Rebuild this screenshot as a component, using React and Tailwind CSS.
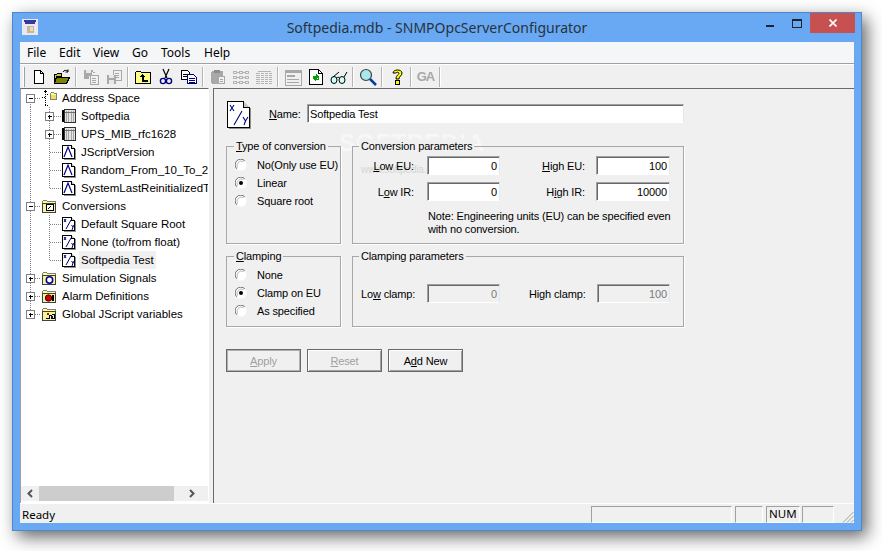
import React from "react";

const ui = "font-['Liberation_Sans',Arial,sans-serif] text-[11.5px] leading-[14px] text-black";

const menus = [
  { label: "File", w: "w-[32px]" },
  { label: "Edit", w: "w-[34px]" },
  { label: "View", w: "w-[39px]" },
  { label: "Go", w: "w-[29px]" },
  { label: "Tools", w: "w-[43px]" },
  { label: "Help", w: "w-[40px]" },
];

const Ico = ({ children }) => (
  <svg width="18" height="18" viewBox="0 0 18 18" shapeRendering="crispEdges">
    {children}
  </svg>
);

// toolbar drawings
const NewIcon = () => (
  <Ico>
    <path d="M4.5 2.5h6l3 3v10h-9z" fill="#fff" stroke="#000" />
    <path d="M10.5 2.5v3h3" fill="none" stroke="#000" />
  </Ico>
);
const OpenIcon = () => (
  <Ico>
    <path d="M1.5 15.5v-9h2l1-1h4v3h-5l-2 7h11l3-6h-3" fill="#c8c850" stroke="#000" />
    <path d="M1.5 15.5l2-6h13l-3 6z" fill="#808000" stroke="#000" />
    <path d="M10 4c1-2 3-2 5-1M15 1.500v2.500h-2.500" fill="none" stroke="#000" shapeRendering="auto" />
  </Ico>
);
const GrayCopy = () => (
  <Ico>
    <path d="M2 2h9v3h2v-1h-2M2 2v9h5v-3h3v-3h1" fill="#a8a8a8" />
    <rect x="8" y="7" width="8" height="9" fill="#f0f0f0" stroke="#a8a8a8" />
    <path d="M10 10h4M10 12h4M10 14h4" stroke="#a8a8a8" />
    <path d="M4 2v3h5V2" fill="#e8e8e8" />
  </Ico>
);
const GrayDisk = () => (
  <Ico>
    <rect x="8" y="2" width="8" height="10" fill="#f0f0f0" stroke="#a8a8a8" />
    <path d="M10 5h4M10 7h4M10 9h4" stroke="#a8a8a8" />
    <path d="M2 7h9v9H2z" fill="#a8a8a8" />
    <path d="M4 7h5v3H4zM4 12h5v4H4z" fill="#e8e8e8" />
  </Ico>
);
const UpIcon = () => (
  <Ico>
    <path d="M1.500 15.500v-11l1-1h4l1 1h9v11z" fill="#ffff80" stroke="#000" />
    <path d="M8.500 6l3 3h-2v3h4v1.500H8V9H5.500z" fill="#000" />
  </Ico>
);
const CutIcon = () => (
  <Ico>
    <path d="M6 1l4 9M12 1L8 10" stroke="#000" strokeWidth="1.200" fill="none" shapeRendering="auto" />
    <circle cx="6" cy="13" r="2.600" fill="none" stroke="#000080" strokeWidth="1.400" shapeRendering="auto" />
    <circle cx="12" cy="13" r="2.600" fill="none" stroke="#000080" strokeWidth="1.400" shapeRendering="auto" />
  </Ico>
);
const CopyIcon = () => (
  <Ico>
    <path d="M1.500 2.500h6l2 2v7h-8z" fill="#fff" stroke="#000" />
    <path d="M3 6h4M3 8h4" stroke="#000" />
    <path d="M7.500 6.500h6l3 3v6h-9z" fill="#fff" stroke="#000080" />
    <path d="M9 10h6M9 12h6M9 14h6" stroke="#000080" />
  </Ico>
);
const GrayClip = () => (
  <Ico>
    <path d="M3 3h10l1 1v4H9v8H3l-1-1V4z" fill="#a8a8a8" />
    <path d="M5 2h6v3H5z" fill="#8c8c8c" />
    <rect x="9.500" y="8.500" width="6" height="7" fill="#f0f0f0" stroke="#a8a8a8" />
    <path d="M11 11h3M11 13h3" stroke="#a8a8a8" />
  </Ico>
);
const GrayList = () => (
  <Ico>
    <path d="M1.500 3.500h3v2h-3zM7.500 3.500h3v2h-3zM13.500 3.500h3v2h-3zM1.500 8.500h3v2h-3zM7.500 8.500h3v2h-3zM13.500 8.500h3v2h-3zM1.500 13.500h3v2h-3zM7.500 13.500h3v2h-3zM13.500 13.500h3v2h-3z" fill="none" stroke="#b4b4b4" />
    <path d="M5 4.500h2M11 4.500h2M5 9.500h2M11 9.500h2M5 14.500h2M11 14.500h2" stroke="#b4b4b4" />
  </Ico>
);
const GrayGrid = () => (
  <Ico>
    <path d="M3 3h13M1 5h16M1 7h16M1 9h16M1 11h16M1 13h16M1 15h16" stroke="#b4b4b4" />
    <path d="M5 4v12M9 4v12M13 4v12" stroke="#f0f0f0" />
  </Ico>
);
const FormIcon = () => (
  <Ico>
    <rect x="1" y="2" width="16" height="15" fill="#f0f0f0" stroke="#a8a8a8" />
    <path d="M1 3.500h16" stroke="#a8a8a8" strokeWidth="2" />
    <path d="M3 7h8v2H3zM3 11h12v1H3zM3 14h12v1H3z" fill="#a8a8a8" />
  </Ico>
);
const RefreshIcon = () => (
  <Ico>
    <path d="M2.500 1.500h9l4 4v11h-13z" fill="#fff" stroke="#000" />
    <path d="M11.500 1.500v4h4" fill="none" stroke="#000" />
    <path d="M6 8h3V6l3 3-3 2V9.500H7.500V11H6zM12 12H9v2l-3-3 3-2v1.500h1.500V9H12z" fill="#00a000" />
  </Ico>
);
const GlassesIcon = () => (
  <Ico>
    <ellipse cx="4" cy="12" rx="3" ry="3.500" fill="#c8ffff" stroke="#000" shapeRendering="auto" />
    <ellipse cx="12" cy="12" rx="3" ry="3.500" fill="#c8ffff" stroke="#000" shapeRendering="auto" />
    <path d="M6.500 10c1-1 2-1 3 0M3 9l6-5M14 9l3-5" fill="none" stroke="#000" shapeRendering="auto" />
  </Ico>
);
const SearchIcon = () => (
  <Ico>
    <circle cx="7" cy="7" r="5.500" fill="#a8e8e8" stroke="#404040" strokeWidth="1.200" shapeRendering="auto" />
    <path d="M11 11l6 6" stroke="#0040a0" strokeWidth="2.500" shapeRendering="auto" />
  </Ico>
);
const HelpIcon = () => (
  <Ico>
    <path d="M5 5c0-4 9-4 9 0 0 3-3 3-3 6H8c0-4 3-4 3-6-1-1-2-1-3 0z" fill="#ffff00" stroke="#000" shapeRendering="auto" />
    <rect x="7.500" y="12.500" width="3.500" height="3.500" fill="#ffff00" stroke="#000" />
  </Ico>
);

const tools = [
  [NewIcon, OpenIcon],
  [GrayCopy, GrayDisk],
  [UpIcon, CutIcon, CopyIcon],
  [GrayClip, GrayList, GrayGrid],
  [FormIcon, RefreshIcon, GlassesIcon],
  [SearchIcon],
  [HelpIcon],
];

// tree drawings
const Folder = ({ children }) => (
  <svg width="16" height="16" viewBox="0 0 16 16" shapeRendering="crispEdges">
    <path d="M1.500 14.500v-11l1-1h3l1 1h8v11z" fill="#ffff80" stroke="#808080" />
    <path d="M1.500 14.500v-9h13v9z" fill="#f4f4a0" stroke="#404040" />
    {children}
  </svg>
);
const ConvFolder = () => (
  <Folder>
    <rect x="5.500" y="6.500" width="7" height="6" fill="#fff" stroke="#000" />
    <path d="M7 11l3-3" stroke="#000" shapeRendering="auto" />
  </Folder>
);
const SimFolder = () => (
  <Folder>
    <circle cx="8.500" cy="10" r="3.200" fill="#fff" stroke="#0000a0" strokeWidth="1.500" shapeRendering="auto" />
  </Folder>
);
const AlarmFolder = () => (
  <Folder>
    <circle cx="7.500" cy="10" r="3.200" fill="#d00000" stroke="#400000" shapeRendering="auto" />
    <path d="M12 7v6" stroke="#000" strokeWidth="1.500" />
  </Folder>
);
const GlobalFolder = () => (
  <Folder>
    <path d="M5 12h3V9h2v3h3V8h-2" fill="none" stroke="#000" />
    <rect x="6" y="7" width="2" height="2" fill="#d00000" />
    <rect x="10" y="10" width="2" height="2" fill="#0000c0" />
  </Folder>
);
const SpaceIcon = () => (
  <svg width="16" height="16" viewBox="0 0 16 16" shapeRendering="crispEdges">
    <path d="M4 4.500h3M1 7.500h3M4.500 2v13M4 15.500h4" stroke="#000" strokeDasharray="1 1" />
    <path d="M2.500 2l2-2 2 2z" fill="#000" />
    <path d="M9.500 9.500v-6l1-1h2l1 1h2v6z" fill="#ffff80" stroke="#808080" />
    <path d="M10 5h5v4h-5z" fill="#e8e060" />
  </svg>
);
const TableIcon = () => (
  <svg width="16" height="16" viewBox="0 0 16 16" shapeRendering="crispEdges">
    <path d="M1.500 2v12" stroke="#000" strokeWidth="2" />
    <rect x="3.500" y="1.500" width="11" height="13" fill="#e4e4e4" stroke="#303030" />
    <path d="M5 3v11M7 3v11M10 3v11M12 3v11" stroke="#a8a8a8" />
    <path d="M4 4h10" stroke="#707070" />
  </svg>
);
const Page = ({ children }) => (
  <svg width="16" height="16" viewBox="0 0 16 16" shapeRendering="crispEdges">
    <path d="M1.500 1.500h9l3 3v10h-12z" fill="#fff" stroke="#000" />
    <path d="M10.500 1.500v3h3" fill="#c0c0c0" stroke="#000" />
    <path d="M14.500 5v10.500H3" fill="none" stroke="#909090" />
    {children}
  </svg>
);
const SignalIcon = () => (
  <Page>
    <path d="M3 13L7 3l4 10" fill="none" stroke="#000080" strokeWidth="1.200" shapeRendering="auto" />
  </Page>
);
const RatioIcon = () => (
  <Page>
    <path d="M3 3l2 3M5 3L3 6M5 13l5-9M10.500 9l1.500 2 1-2M12 11l-1 3" fill="none" stroke="#000080" shapeRendering="auto" />
  </Page>
);

const rows = [
  { label: "Address Space", level: 0, exp: "-", Icon: SpaceIcon, first: true },
  { label: "Softpedia", level: 1, exp: "+", Icon: TableIcon },
  { label: "UPS_MIB_rfc1628", level: 1, exp: "+", Icon: TableIcon },
  { label: "JScriptVersion", level: 1, Icon: SignalIcon },
  { label: "Random_From_10_To_20", level: 1, Icon: SignalIcon },
  { label: "SystemLastReinitializedTime", level: 1, Icon: SignalIcon, lastChild: true },
  { label: "Conversions", level: 0, exp: "-", Icon: ConvFolder },
  { label: "Default Square Root", level: 1, Icon: RatioIcon },
  { label: "None (to/from float)", level: 1, Icon: RatioIcon },
  { label: "Softpedia Test", level: 1, Icon: RatioIcon, lastChild: true, selected: true },
  { label: "Simulation Signals", level: 0, exp: "+", Icon: SimFolder },
  { label: "Alarm Definitions", level: 0, exp: "+", Icon: AlarmFolder },
  { label: "Global JScript variables", level: 0, exp: "+", Icon: GlobalFolder, last: true },
];

const Expander = ({ x, open }) => (
  <g>
    <rect x={x - 4} y="5.500" width="8" height="8" fill="#fff" stroke="#808080" />
    <path d={`M${x - 2} 9.500h4`} stroke="#000" />
    {!open && <path d={`M${x} 7.500v4`} stroke="#000" />}
  </g>
);

const dots = { stroke: "#808080", strokeDasharray: "1 1", fill: "none" };

const Gutter = ({ row }) => {
  const rootX = 9.5;
  const childX = 28.5;
  if (row.level === 0) {
    return (
      <svg width="20" height="18" className="shrink-0" shapeRendering="crispEdges">
        <path d={`M${rootX} ${row.first ? 9 : 0}V${row.last ? 9 : 18}`} {...dots} />
        <path d={`M${rootX} 9.500H20`} {...dots} />
        <Expander x={rootX} open={row.exp === "-"} />
      </svg>
    );
  }
  return (
    <svg width="40" height="18" className="shrink-0" shapeRendering="crispEdges">
      <path d={`M${rootX} 0V18`} {...dots} />
      <path d={`M${childX} 0V${row.lastChild ? 9 : 18}`} {...dots} />
      <path d={`M${childX} 9.500H40`} {...dots} />
      {row.exp && <Expander x={childX} open={false} />}
    </svg>
  );
};

const TreeRow = ({ row }) => (
  <div className="flex h-[18px] w-max items-center whitespace-nowrap">
    <Gutter row={row} />
    <div className="h-[16px] w-[16px] shrink-0">
      <row.Icon />
    </div>
    <span
      className={
        row.level === 0
          ? "ml-[5px] shrink-0"
          : row.selected
            ? "ml-[2px] flex h-[18px] shrink-0 items-center bg-[#f0f0f0] px-[2px]"
            : "ml-[4px] shrink-0"
      }
    >
      {row.label}
    </span>
  </div>
);

const Radio = ({ label, checked }) => (
  <div className="flex h-[18px] items-center gap-[10px] whitespace-nowrap">
    <svg width="12" height="12" viewBox="0 0 12 12" className="shrink-0">
      <circle cx="6" cy="6" r="5.500" fill="#fff" />
      <path d="M1.800 9.800A5.500 5.500 0 0 1 9.800 1.800" fill="none" stroke="#707070" />
      <path d="M2.500 8.500A4.500 4.500 0 0 1 8.500 2.500" fill="none" stroke="#b8b8b8" />
      {checked && <circle cx="6" cy="6" r="2" fill="#000" />}
    </svg>
    <span>{label}</span>
  </div>
);

const Group = ({ title, className, legendClass = "left-[7px]", children }) => (
  <div className={`relative border border-[#a8a8a8] shadow-[1px_1px_0_#fff] ${className}`}>
    <span className={`absolute -top-[8px] whitespace-nowrap bg-[#f0f0f0] px-[2px] ${legendClass}`}>{title}</span>
    {children}
  </div>
);

const Field = ({ value = "", disabled, className = "" }) => (
  <div
    className={`flex h-[19px] items-center justify-end border border-t-[#a0a0a0] border-l-[#a0a0a0] border-r-[#e8e8e8] border-b-[#fff] px-[2px] shadow-[inset_1px_1px_0_#696969] ${disabled ? "bg-[#f0f0f0] text-[#7a7a7a]" : "bg-white"} ${className}`}
  >
    {value}
  </div>
);

const Btn = ({ children, disabled, primary }) => (
  <div
    className={`flex h-[23px] w-[75px] items-center justify-center border border-[#696969] shadow-[inset_1px_1px_0_#fff,inset_-1px_-1px_0_#a0a0a0] ${primary ? "border-[#555] outline outline-[#b0b0b0] -outline-offset-2" : ""} ${disabled ? "text-[#a0a0a0]" : ""}`}
  >
    {children}
  </div>
);

const Chevron = ({ d }) => (
  <svg width="9" height="9" viewBox="0 0 9 9">
    <path d={d} fill="none" stroke="#555" strokeWidth="2" />
  </svg>
);

const StatusCell = ({ className, children }) => (
  <div
    className={`flex h-[17px] items-center border border-t-[#a0a0a0] border-l-[#a0a0a0] border-r-white border-b-white pl-[2px] ${className}`}
  >
    {children}
  </div>
);

const Sep = () => <div className="mx-[2px] h-[20px] w-[2px] border-l border-r border-l-[#b4b4b4] border-r-white" />;

export default function App() {
  return (
    <div className="h-[551px] w-[882px] overflow-hidden bg-white pl-[12px] pt-[12px]">
      <div className="flex h-[519px] w-[850px] flex-col border border-[#4f88c8] bg-[#69a8f2] shadow-[5px_6px_16px_rgba(0,0,0,0.6)]">
        {/* Title bar */}
        <div className="grid h-[29px] shrink-0 grid-cols-[1fr_auto_1fr]">
          <div className="pl-[9px] pt-[6px]">
            <svg width="16" height="16" viewBox="0 0 16 16" shapeRendering="crispEdges">
              <rect width="16" height="16" fill="#e8e8f4" />
              <path d="M2 2h12M3 4h10" stroke="#3838a0" strokeWidth="1.200" />
              <path d="M5 7h7v7H5z" fill="#c8b890" />
              <path d="M8 8h3v4H8z" fill="#e8dcc0" />
            </svg>
          </div>
          <div className="pt-[5px] font-['Noto_Sans',sans-serif] text-[14px] leading-[20px] text-[#263340]">
            Softpedia.mdb - SNMPOpcServerConfigurator
          </div>
          <div className="flex items-start justify-end pr-[6px]">
            <div className="mr-[18px] mt-[12px] h-[2px] w-[8px] bg-[#1c2430]" />
            <div className="mr-[8px] mt-[6px] h-[9px] w-[10px] border border-t-2 border-[#1c2430]" />
            <div className="flex h-[20px] w-[45px] items-center justify-center bg-[#c75050]">
              <svg width="8" height="8" viewBox="0 0 8 8">
                <path d="M0.500 0.500l7 7M7.500 0.500l-7 7" stroke="#fff" strokeWidth="1.600" />
              </svg>
            </div>
          </div>
        </div>

        {/* Client area */}
        <div className={`mx-[7px] mb-[7px] flex min-h-0 flex-1 flex-col bg-[#f0f0f0] ${ui}`}>
          <div className="flex h-[22px] shrink-0 items-center border-b border-[#a0a0a0] bg-[#f5f6f7] pl-[7px] font-['Noto_Sans',sans-serif] text-[12px]">
            {menus.map((m) => (
              <div key={m.label} className={m.w}>
                {m.label}
              </div>
            ))}
          </div>

          <div className="flex h-[24px] shrink-0 items-center border-t border-white pl-[3px]">
            <div className="mr-[2px] h-[20px] w-[2px] border-l border-r border-l-white border-r-[#a0a0a0]" />
            {tools.map((group, i) => (
              <React.Fragment key={i}>
                {group.map((Icon, j) => (
                  <div key={j} className="flex h-[22px] w-[23px] items-center justify-center">
                    <Icon />
                  </div>
                ))}
                <Sep />
              </React.Fragment>
            ))}
            <div className="flex h-[22px] w-[23px] items-center justify-center text-[13px] font-bold tracking-[-1px] text-[#a8a8a8]">
              GA
            </div>
            <Sep />
          </div>

          <div className="flex h-[415px] shrink-0 gap-[4px]">
            {/* Tree pane */}
            <div className="flex w-[189px] shrink-0 flex-col border-l border-t border-r border-l-[#a0a0a0] border-t-[#696969] border-r-white bg-white">
              <div className="min-h-0 flex-1 overflow-hidden">
                {rows.map((row) => (
                  <TreeRow key={row.label} row={row} />
                ))}
              </div>
              <div className="mb-[2px] flex h-[15px] shrink-0 items-center bg-[#f0f0f0]">
                <div className="flex w-[18px] justify-center">
                  <Chevron d="M6 1L2.500 4.500 6 8" />
                </div>
                <div className="h-full w-[135px] bg-[#cdcdcd]" />
                <div className="flex flex-1 justify-center pl-[1px]">
                  <Chevron d="M3 1l3.500 3.500L3 8" />
                </div>
              </div>
            </div>

            {/* Form pane */}
            <div className="relative flex-1 border-l border-t border-l-[#696969] border-t-[#696969] pl-[12px] pt-[12px] text-[11px] tracking-[-0.14px]">
              {/* faint watermark behind the form */}
              <span className="pointer-events-none absolute left-[125px] top-[42px] text-[24px] font-bold leading-[24px] tracking-[1px] text-[#f7f7f7]">
                SOFTPEDIA
              </span>
              <span className="pointer-events-none absolute left-[147px] top-[74px] text-[10px] text-[#d4d4d4]">
                www.softpedia.com
              </span>

              <div className="flex h-[27px] items-start">
                <div className="ml-[1px] shrink-0">
                  <svg width="24" height="28" viewBox="0 0 24 28" shapeRendering="crispEdges">
                    <path d="M0.500 0.500h16l6 6v20h-22z" fill="#fff" stroke="#000" />
                    <path d="M16.500 0.500v6h6" fill="#c8c8c8" stroke="#000" />
                    <path d="M23.500 7v20.500H2" fill="none" stroke="#909090" />
                    <path d="M3 4l4 6M7 4l-4 6M7 24l8-14M16 16l2.500 4 2.500-4M18.500 20l-1.500 4" fill="none" stroke="#000080" strokeWidth="1.100" shapeRendering="auto" />
                  </svg>
                </div>
                <span className="ml-[18px] mt-[6px] w-[38px] shrink-0">
                  <u>N</u>ame:
                </span>
                <div className="mt-[3px] flex h-[19px] w-[377px] items-center border border-t-[#a0a0a0] border-l-[#a0a0a0] border-r-[#e8e8e8] border-b-white bg-white pl-[2px] shadow-[inset_1px_1px_0_#696969]">
                  Softpedia Test
                </div>
              </div>

              <div className="mt-[18px] flex gap-[11px]">
                <Group
                  className="h-[98px] w-[115px] pl-[8px] pt-[9px]"
                  title={
                    <>
                      <u>T</u>ype of conversion
                    </>
                  }
                >
                  <Radio label="No(Only use EU)" />
                  <Radio label="Linear" checked />
                  <Radio label="Square root" />
                </Group>
                <Group className="h-[98px] w-[332px] pt-[9px]" legendClass="left-[6px]" title="Conversion parameters">
                  <div className="flex h-[19px] items-center">
                    <span className="w-[61px] text-right">
                      <u>L</u>ow EU:
                    </span>
                    <Field value="0" className="ml-[13px] w-[73px]" />
                    <span className="w-[85px] text-right">
                      <u>H</u>igh EU:
                    </span>
                    <Field value="100" className="ml-[11px] w-[74px]" />
                  </div>
                  <div className="mt-[7px] flex h-[19px] items-center">
                    <span className="w-[61px] text-right">
                      L<u>o</u>w IR:
                    </span>
                    <Field value="0" className="ml-[13px] w-[73px]" />
                    <span className="w-[85px] text-right">
                      H<u>i</u>gh IR:
                    </span>
                    <Field value="10000" className="ml-[11px] w-[74px]" />
                  </div>
                  <p className="mt-[9px] whitespace-nowrap pl-[75px] leading-[13px]">
                    Note: Engineering units (EU) can be specified even
                    <br />
                    with no conversion.
                  </p>
                </Group>
              </div>

              <div className="mt-[12px] flex gap-[11px]">
                <Group
                  className="h-[71px] w-[115px] pl-[8px] pt-[9px]"
                  title={
                    <>
                      <u>C</u>lamping
                    </>
                  }
                >
                  <Radio label="None" />
                  <Radio label="Clamp on EU" checked />
                  <Radio label="As specified" />
                </Group>
                <Group className="h-[71px] w-[332px] pt-[27px]" legendClass="left-[6px]" title="Clamping parameters">
                  <div className="flex h-[19px] items-center">
                    <span className="w-[74px] pl-[8px]">
                      Lo<u>w</u> clamp:
                    </span>
                    <Field value="0" disabled className="w-[73px]" />
                    <span className="ml-[29px] w-[68px]">
                      Hi<u>g</u>h clamp:
                    </span>
                    <Field value="100" disabled className="w-[73px]" />
                  </div>
                </Group>
              </div>

              <div className="mt-[22px] flex gap-[6px]">
                <Btn disabled primary>
                  <span>
                    <u>A</u>pply
                  </span>
                </Btn>
                <Btn disabled>
                  <span>
                    <u>R</u>eset
                  </span>
                </Btn>
                <Btn>
                  <span>
                    A<u>d</u>d New
                  </span>
                </Btn>
              </div>
            </div>
          </div>

          {/* Status bar */}
          <div className="flex h-[20px] shrink-0 items-center border-t border-white pl-[2px] pt-[1px]">
            <span className="flex-1 pt-[2px] font-['Noto_Sans',sans-serif]">Ready</span>
            <StatusCell className="w-[141px]" />
            <StatusCell className="ml-[3px] w-[28px]" />
            <StatusCell className="ml-[3px] w-[34px] font-['Noto_Sans',sans-serif]">NUM</StatusCell>
            <StatusCell className="ml-[2px] w-[32px]" />
            <div className="flex h-full w-[20px] items-end justify-end">
              <svg width="12" height="12" viewBox="0 0 12 12">
                <path d="M11.500 1L1 11.500M11.500 5L5 11.500M11.500 9L9 11.500" stroke="#a0a0a0" fill="none" />
              </svg>
            </div>
          </div>
        </div>
      </div>
    </div>
  );
}
